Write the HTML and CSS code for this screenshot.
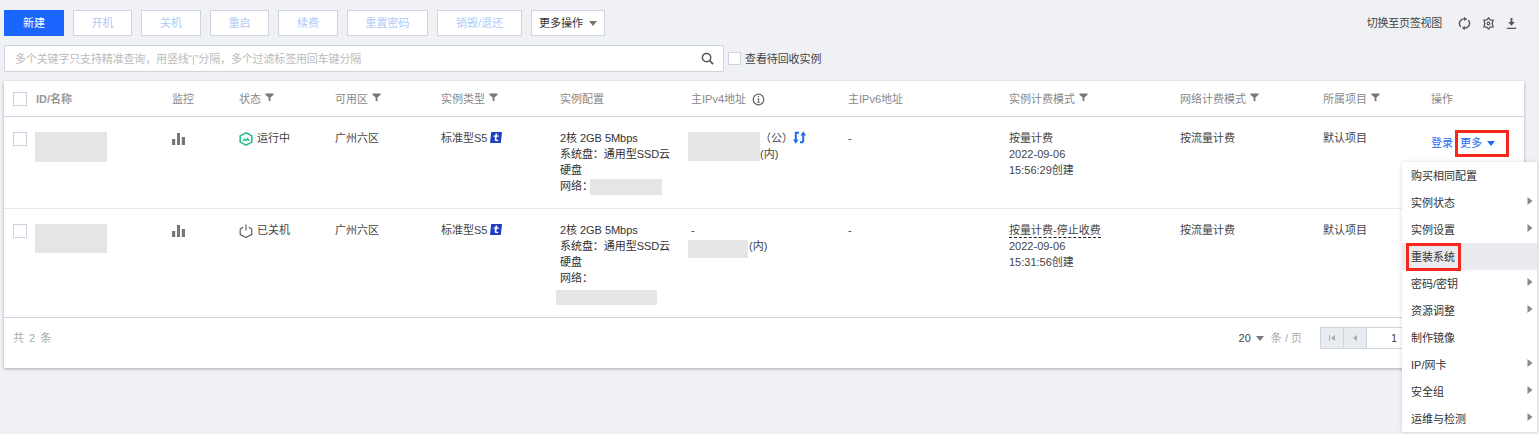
FILE: index.html
```html
<!DOCTYPE html>
<html lang="zh-CN">
<head>
<meta charset="utf-8">
<title>实例</title>
<link rel="stylesheet" href="styles.css">
</head>
<body>
<svg class="defs" width="0" height="0">
  <symbol id="funnel" viewBox="0 0 10 10"><path d="M0.500 0.500h9v1.400L6 5.100V9.500L4 8.500V5.100L0.500 1.900z" fill="#777"/></symbol>
  <symbol id="bars" viewBox="0 0 13 12"><path d="M0 6h3.200v6H0zM5 0h3v12H5zM9.800 4H13v8H9.800z" fill="#777"/></symbol>
  <symbol id="tag" viewBox="0 0 12 11"><path d="M1.200 0H12L10.800 11H0z" fill="#1c3fc4"/><path d="M5.600 1.500h1.700l-.3 2h1.900l-.2 1.300H6.800l-.4 2.500c-.1.700.8.700 1.900.5l-.2 1.300c-2.100.4-3.600.1-3.400-1.800l.4-2.500H3.500l.2-1.300h1.600z" fill="#fff"/></symbol>
  <symbol id="arrow" viewBox="0 0 6 10"><path d="M0.500 1L5.500 5L0.500 9z" fill="#888"/></symbol>
</svg>

<div class="toolbar">
  <button class="btn primary w-60">新建</button>
  <button class="btn disabled w-59">开机</button>
  <button class="btn disabled w-60">关机</button>
  <button class="btn disabled w-59">重启</button>
  <button class="btn disabled w-60">续费</button>
  <button class="btn disabled w-81">重置密码</button>
  <button class="btn disabled w-85">销毁/退还</button>
  <button class="btn more">更多操作<span class="caret grey"></span></button>
  <div class="tools">
    <span class="tool-text">切换至页签视图</span>
    <svg class="tool-icon" viewBox="0 0 14 14"><path d="M3 10.500A5 5 0 0 1 7.500 2.100M11 3.500A5 5 0 0 1 6.500 11.900" fill="none" stroke="#555" stroke-width="1.500"/><path d="M6.500 0L10 2.200L6.500 4.400zM7.500 9.600L4 11.800L7.500 14z" fill="#555"/></svg>
    <svg class="tool-icon" viewBox="0 0 14 14"><path d="M7 1L8.800 3.200L11.900 3.300L11 7L11.900 10.700L8.800 10.800L7 13L5.200 10.800L2.100 10.700L3 7L2.100 3.300L5.200 3.200z" fill="none" stroke="#555" stroke-width="1.400"/><circle cx="7" cy="7" r="1.500" fill="none" stroke="#555" stroke-width="1.200"/></svg>
    <svg class="tool-icon" viewBox="0 0 14 14"><path d="M6 1H8V5.500H10.500L7 9.500L3.500 5.500H6zM2 11.500H12V13H2z" fill="#555"/></svg>
  </div>
</div>

<div class="search-row">
  <div class="search">
    <span class="placeholder">多个关键字只支持精准查询，用竖线“|”分隔，多个过滤标签用回车键分隔</span>
    <svg class="search-icon" viewBox="0 0 14 14"><circle cx="6" cy="6" r="4.500" fill="none" stroke="#555" stroke-width="1.600"/><path d="M9.300 9.300L13 13" stroke="#555" stroke-width="1.800"/></svg>
  </div>
  <label class="recycle"><span class="check small"></span>查看待回收实例</label>
</div>

<section class="card">
  <div class="row head">
    <div class="cell first"><span class="check"></span><span class="id-title">ID/名称</span></div>
    <div class="cell">监控</div>
    <div class="cell">状态<svg class="funnel"><use href="#funnel"/></svg></div>
    <div class="cell">可用区<svg class="funnel"><use href="#funnel"/></svg></div>
    <div class="cell">实例类型<svg class="funnel"><use href="#funnel"/></svg></div>
    <div class="cell">实例配置</div>
    <div class="cell">主IPv4地址<svg class="info" viewBox="0 0 14 14"><circle cx="7" cy="7" r="5.700" fill="none" stroke="#666" stroke-width="1.300"/><path d="M6.300 3.200h1.400v1.400H6.300zM5.800 6h1.900v3.600h.8v1H5.500v-1h.9V7h-.6z" fill="#666"/></svg></div>
    <div class="cell">主IPv6地址</div>
    <div class="cell">实例计费模式<svg class="funnel"><use href="#funnel"/></svg></div>
    <div class="cell">网络计费模式<svg class="funnel"><use href="#funnel"/></svg></div>
    <div class="cell">所属项目<svg class="funnel"><use href="#funnel"/></svg></div>
    <div class="cell">操作</div>
  </div>

  <div class="row body row-one">
    <div class="cell first"><span class="check inset"></span><span class="mask name"></span></div>
    <div class="cell"><svg class="bars"><use href="#bars"/></svg></div>
    <div class="cell status">
      <svg class="status-icon" viewBox="0 0 14 14"><path d="M7 .8L12.800 3.900V10.100L7 13.200L1.200 10.100V3.900z" fill="none" stroke="#2bbd8d" stroke-width="1.600"/><path d="M3.100 9L5.400 5.900L7 7.500L8.700 5.500L10.900 9H9.100L8.500 8L7 9.400L5.500 8.100L4.800 9z" fill="#2bbd8d"/></svg>运行中
    </div>
    <div class="cell">广州六区</div>
    <div class="cell">标准型S5<svg class="tag"><use href="#tag"/></svg></div>
    <div class="cell config">2核 2GB 5Mbps<br>系统盘：通用型SSD云<br>硬盘<br>网络：<span class="mask net-one"></span></div>
    <div class="cell ipv4">
      <span class="mask ip-one"></span>
      <div class="ip-labels">
        <div class="public">（公）<svg class="swap" viewBox="0 0 13 13"><path d="M6 1.800H2.800V10.500M10.200 11.200H7M10.200 11.200V2.500" fill="none" stroke="#1f6cf0" stroke-width="2"/><path d="M0 8.500H5.600L2.800 12.800zM7.400 4.500H13L10.200 0.200z" fill="#1f6cf0"/></svg></div>
        <div>(内)</div>
      </div>
    </div>
    <div class="cell">-</div>
    <div class="cell">按量计费<br>2022-09-06<br>15:56:29创建</div>
    <div class="cell">按流量计费</div>
    <div class="cell">默认项目</div>
    <div class="cell ops"><a class="link">登录</a><a class="link more-link">更多<span class="caret blue"></span></a></div>
  </div>

  <div class="row body row-two">
    <div class="cell first"><span class="check inset"></span><span class="mask name"></span></div>
    <div class="cell"><svg class="bars"><use href="#bars"/></svg></div>
    <div class="cell status">
      <svg class="status-icon" viewBox="0 0 14 14"><path d="M4.200 3.200L1.200 5V10.600L7 13.500L12.800 10.600V5L9.800 3.200M7 .5V6.500" fill="none" stroke="#555" stroke-width="1.100"/></svg>已关机
    </div>
    <div class="cell">广州六区</div>
    <div class="cell">标准型S5<svg class="tag"><use href="#tag"/></svg></div>
    <div class="cell config">2核 2GB 5Mbps<br>系统盘：通用型SSD云<br>硬盘<br>网络：<span class="mask net-two"></span></div>
    <div class="cell ipv4-two">
      <div class="dash">-</div>
      <div class="ip-line"><span class="mask ip-two"></span><span class="inner">(内)</span></div>
    </div>
    <div class="cell">-</div>
    <div class="cell"><span class="dashed">按量计费-停止收费</span><br>2022-09-06<br>15:31:56创建</div>
    <div class="cell">按流量计费</div>
    <div class="cell">默认项目</div>
    <div class="cell"></div>
  </div>

  <footer class="foot">
    <span class="total">共 2 条</span>
    <div class="pager">
      <span class="size">20<span class="caret grey small-caret"></span></span>
      <span class="per">条 / 页</span>
      <span class="page-btn"><svg viewBox="0 0 8 8"><path d="M1 1h1v6H1zM7 1v6L3 4z" fill="#aaa"/></svg></span>
      <span class="page-btn"><svg viewBox="0 0 8 8"><path d="M6 1v6L2 4z" fill="#aaa"/></svg></span>
      <span class="page-num">1</span>
    </div>
  </footer>
</section>

<nav class="menu">
  <div class="menu-item">购买相同配置</div>
  <div class="menu-item">实例状态<svg class="arrow"><use href="#arrow"/></svg></div>
  <div class="menu-item">实例设置<svg class="arrow"><use href="#arrow"/></svg></div>
  <div class="menu-item active">重装系统</div>
  <div class="menu-item">密码/密钥<svg class="arrow"><use href="#arrow"/></svg></div>
  <div class="menu-item">资源调整<svg class="arrow"><use href="#arrow"/></svg></div>
  <div class="menu-item">制作镜像</div>
  <div class="menu-item">IP/网卡<svg class="arrow"><use href="#arrow"/></svg></div>
  <div class="menu-item">安全组<svg class="arrow"><use href="#arrow"/></svg></div>
  <div class="menu-item">运维与检测<svg class="arrow"><use href="#arrow"/></svg></div>
</nav>
<div class="red-box box-more"></div>
<div class="red-box box-reinstall"></div>
</body>
</html>
```

FILE: styles.css
```css
* { box-sizing: border-box; }
html, body { height: 100%; }
body {
  margin: 0;
  padding: 10px 2px 0 4px;
  background: #f0f1f5;
  color: #333;
  font: 11px/16px "Liberation Sans", "Noto Sans CJK SC", sans-serif;
  overflow: hidden;
  position: relative;
}
.defs { position: absolute; }

.toolbar { display: flex; align-items: center; gap: 9px; height: 26px; }
.btn {
  height: 26px;
  padding: 0;
  border: 1px solid #cfd5de;
  background: #fff;
  font: inherit;
  display: flex;
  align-items: center;
  justify-content: center;
}
.w-59 { width: 59px; }
.w-60 { width: 60px; }
.w-81 { width: 81px; }
.w-85 { width: 85px; }
.primary { background: #1a66ff; border-color: #1a66ff; color: #fff; }
.disabled { color: #aecbf7; }
.more { width: 74px; color: #333; gap: 6px; }
.caret { display: inline-block; width: 0; height: 0; border-left: 4px solid transparent; border-right: 4px solid transparent; }
.caret.grey { border-top: 5px solid #777; }
.caret.blue { border-top: 5px solid #1f6cf0; margin-left: 5px; vertical-align: 1px; }
.small-caret { margin-left: 5px; vertical-align: 1px; }
.tools { margin-left: auto; margin-right: 19px; display: flex; align-items: center; color: #444; }
.tool-text { margin-right: 16px; letter-spacing: -.25px; }
.tool-icon { width: 13px; height: 13px; margin-right: 10.500px; }
.tool-icon:last-child { margin-right: 0; }

.search-row { display: flex; align-items: center; margin-top: 9px; height: 27px; }
.search {
  width: 720px;
  height: 27px;
  background: #fff;
  border: 1px solid #cfd5de;
  display: flex;
  align-items: center;
  justify-content: space-between;
  padding: 0 9px 0 10px;
}
.placeholder { color: #bbb; letter-spacing: -.15px; }
.search-icon { width: 13px; height: 13px; }
.recycle { display: flex; align-items: center; margin-left: 4px; color: #444; letter-spacing: -.1px; }
.check { display: block; width: 14px; height: 14px; background: #fff; border: 1px solid #cdd3e0; flex: none; }
.check.small { width: 13px; height: 13px; margin-right: 4px; }

.card {
  margin-top: 9px;
  width: 1520px;
  background: #fff;
  box-shadow: 0 1px 3px rgba(0, 0, 0, .3);
}
.row {
  display: grid;
  grid-template-columns: 168px 67px 96px 106px 119px 131px 157px 161px 171px 143px 108px 93px;
}
.head { height: 36px; align-items: center; color: #888; border-bottom: 1px solid #cdd3e0; }
.body { padding-top: 13px; border-bottom: 1px solid #e6e8ee; color: #444; }
.row-one { height: 92px; }
.row-two { height: 109px; border-bottom-color: #cdd3e0; }
.first { display: flex; padding-left: 9px; align-items: flex-start; }
.head .first { align-items: center; }
.id-title { margin-left: 9px; font-weight: 700; color: #999; }
.inset { margin-top: 2px; }
.mask { display: block; background: #e5e5e5; }
.name { width: 72px; height: 30px; margin: 2px 0 0 8px; }
.row-two .name { height: 29px; }
.funnel { width: 9px; height: 9px; margin-left: 4px; vertical-align: 1px; }
.info { width: 13px; height: 13px; margin-left: 6px; vertical-align: -3px; }
.bars { display: block; width: 13px; height: 12px; margin-top: 3px; }
.status { display: flex; align-items: flex-start; }
.status-icon { width: 14px; height: 14px; margin: 2px 4px 0 0; flex: none; }
.tag { width: 12px; height: 11px; margin-left: 3px; vertical-align: -1px; }
.config { padding-right: 14px; color: #333; letter-spacing: -.05px; }
.net-one { display: inline-block; width: 72px; height: 16px; vertical-align: top; margin: 1px 0 0 -3px; }
.net-two { width: 101px; height: 15px; margin: 4px 0 0 -4px; }

.ipv4 { display: flex; margin-left: -3px; }
.ip-one { width: 72px; height: 29px; margin-top: 2px; flex: none; }
.ip-labels { color: #444; }
.swap { width: 13px; height: 13px; vertical-align: -2px; }
.ipv4-two { margin-left: -3px; }
.dash { padding-left: 3px; }
.ip-line { display: flex; align-items: flex-start; margin-top: 2px; }
.ip-two { width: 60px; height: 18px; margin-right: 1px; }
.inner { margin-top: -2px; }
.dashed { border-bottom: 1px dashed #222; padding-bottom: 1px; }

.ops { padding-top: 5px; white-space: nowrap; }
.link { color: #1f6cf0; }
.more-link { margin-left: 7px; }

.foot { height: 50px; display: flex; align-items: center; justify-content: space-between; padding: 0 0 10px 9px; }
.total { color: #aaa; word-spacing: 2px; }
.pager { display: flex; align-items: center; padding-right: 98px; }
.size { color: #444; }
.per { color: #aaa; margin: 0 18px 0 7px; }
.page-btn { width: 24px; height: 22px; background: #e8ebf0; border: 1px solid #cfd5de; margin-right: -1px; display: flex; align-items: center; justify-content: center; }
.page-btn svg { width: 8px; height: 8px; }
.page-num { width: 60px; height: 22px; background: #fff; border: 1px solid #cfd5de; text-align: right; line-height: 20px; padding-right: 28px; color: #444; }

.menu {
  position: absolute;
  left: 1402px;
  top: 162px;
  width: 135px;
  background: #fff;
  box-shadow: 0 0 4px rgba(0, 0, 0, .15);
  color: #333;
}
.menu-item { height: 27px; padding: 0 6px 0 9px; display: flex; align-items: center; justify-content: space-between; }
.menu-item.active { background: #e9ebef; }
.arrow { width: 6px; height: 10px; margin-top: -3px; margin-right: -2px; }

.red-box { position: absolute; border: 3px solid #f5281e; }
.box-more { left: 1455px; top: 130px; width: 54px; height: 27px; }
.box-reinstall { left: 1406px; top: 243px; width: 55px; height: 28px; }
```
